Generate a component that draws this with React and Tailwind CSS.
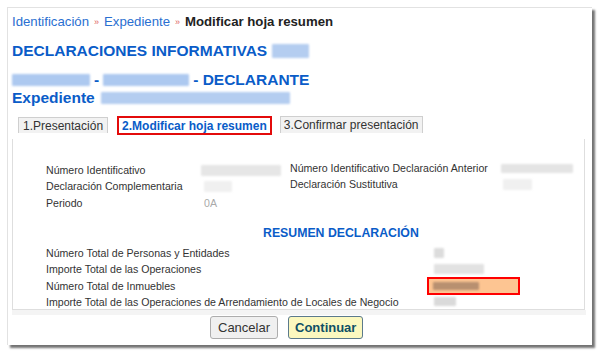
import React from 'react';

const Blur = ({ className }) => (
  <span className={`inline-block align-middle rounded-[1px] blur-[1px] ${className}`} />
);

const Row = ({ label, labelW, children }) => (
  <div className="flex h-[16.3px] items-center">
    <span className={`shrink-0 whitespace-nowrap ${labelW}`}>{label}</span>
    {children}
  </div>
);

const App = () => {
  return (
    <div className="w-[600px] h-[353px] bg-white pt-[7px] pl-[7px] overflow-hidden font-['Liberation_Sans',Arial,sans-serif]">
      <div className="w-[585px] h-[338px] bg-white border-t border-l border-[#e2e2e2] shadow-[3px_3px_2px_rgba(0,0,0,0.55)] flex flex-col">
        {/* breadcrumb */}
        <div className="flex items-center gap-[5px] pl-[4px] pt-[6px] text-[13.2px] leading-[16px]">
          <span className="text-[#2a6fd1]">Identificación</span>
          <span className="text-[#e06060] text-[9px]">»</span>
          <span className="text-[#2a6fd1]">Expediente</span>
          <span className="text-[#e06060] text-[9px]">»</span>
          <span className="font-bold text-[#222]">Modificar hoja resumen</span>
        </div>

        {/* headings */}
        <div className="pl-[4px] pt-[12px] text-[#0a5cc8] font-bold">
          <div className="flex items-center gap-[5px] text-[15.5px] leading-[18px]">
            <span>DECLARACIONES INFORMATIVAS</span>
            <Blur className="w-[37px] h-[14px] bg-[#b4cdf0]" />
          </div>
          <div className="flex items-center gap-[4px] mt-[11px] text-[15.5px] leading-[17px]">
            <Blur className="w-[78px] h-[12px] bg-[#adc9f0]" />
            <span>-</span>
            <Blur className="w-[86px] h-[12px] bg-[#adc9f0]" />
            <span>- DECLARANTE</span>
          </div>
          <div className="flex items-center gap-[6px] text-[15.5px] leading-[19px]">
            <span>Expediente</span>
            <Blur className="w-[189px] h-[12px] bg-[#b4cdf0]" />
          </div>
        </div>

        {/* tabs */}
        <div className="flex items-start pl-[10px] mt-[3px] text-[12px] leading-[14px] h-[20px]">
          <div className="mt-[7px] h-[16px] px-[4px] pt-[1px] border border-b-0 border-[#cfcfcf] bg-[#f2f2f2] text-[#333]">1.Presentación</div>
          <div className="ml-[9px] mt-[6px] h-[19px] px-[3px] pt-[1px] border-2 border-[#e30b0b] text-[#0a5cc8] font-bold">2.Modificar hoja resumen</div>
          <div className="ml-[8px] mt-[6px] h-[17px] px-[3px] pt-[1px] border border-b-0 border-[#cfcfcf] bg-[#f2f2f2] text-[#333]">3.Confirmar presentación</div>
        </div>

        {/* panel */}
        <div className="ml-[4px] mt-[9px] w-[573px] h-[171px] border-l border-r border-b border-[#dedede] text-[10.6px] text-[#333] leading-[14px] pl-[33px] pt-[23px]">
          <div className="flex">
            <div className="w-[244px]">
              <Row label="Número Identificativo" labelW="w-[155px]"><Blur className="w-[80px] h-[11px] bg-[#e6e6e6]" /></Row>
              <Row label="Declaración Complementaria" labelW="w-[158px]"><Blur className="w-[28px] h-[11px] bg-[#f0f0f0]" /></Row>
              <Row label="Periodo" labelW="w-[158px]"><span className="text-[#aaa]">0A</span></Row>
            </div>
            <div className="-mt-[2px]">
              <Row label="Número Identificativo Declaración Anterior" labelW="w-[211px]"><Blur className="w-[72px] h-[9px] bg-[#e4e4e4]" /></Row>
              <Row label="Declaración Sustitutiva" labelW="w-[213px]"><Blur className="w-[29px] h-[11px] bg-[#f0f0f0]" /></Row>
            </div>
          </div>
          <div className="pl-[217px] text-[#0a5cc8] font-bold text-[12.3px] mt-[15px] mb-[5px]">RESUMEN DECLARACIÓN</div>
          <div className="flex flex-col">
            <Row label="Número Total de Personas y Entidades" labelW="w-[388px]"><Blur className="w-[10px] h-[10px] bg-[#dcdcdc]" /></Row>
            <Row label="Importe Total de las Operaciones" labelW="w-[388px]"><Blur className="w-[50px] h-[10px] bg-[#e2e2e2]" /></Row>
            <div className="flex h-[16.3px] items-center">
              <span className="w-[381px]">Número Total de Inmuebles</span>
              <span className="w-[93px] h-[18px] border-2 border-[#f00] bg-[#fdc592] flex items-center pl-[4px]">
                <Blur className="w-[46px] h-[8px] bg-[#b89070]" />
              </span>
            </div>
            <Row label="Importe Total de las Operaciones de Arrendamiento de Locales de Negocio" labelW="w-[388px]"><Blur className="w-[22px] h-[9px] bg-[#dadada]" /></Row>
          </div>
        </div>
        <div className="ml-[4px] w-[574px] h-[5px] bg-[#f4f4f4]" />

        {/* buttons */}
        <div className="flex items-center gap-[10px] pl-[202px] mt-[1px]">
          <button className="h-[23px] px-[7px] rounded-[3px] border border-[#adadad] bg-[#f0f0f0] text-[13px] text-[#333]">Cancelar</button>
          <button className="h-[23px] px-[6px] rounded-[3px] border border-[#5b7a8c] bg-[#fbf8bf] text-[13px] font-bold text-[#0e4f66]">Continuar</button>
        </div>
      </div>
    </div>
  );
};

export default App;
